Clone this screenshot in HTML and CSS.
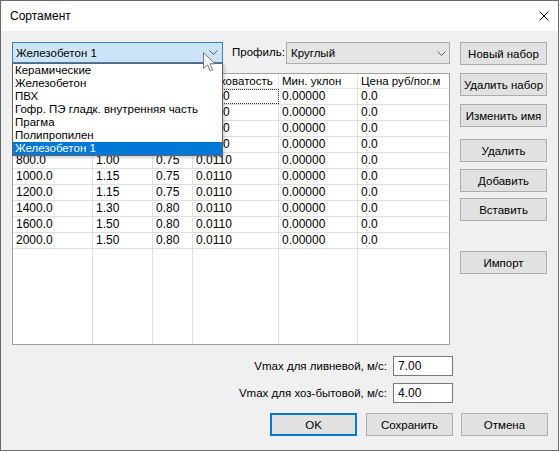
FILE: index.html
```html
<!DOCTYPE html>
<html lang="ru">
<head>
<meta charset="utf-8">
<title>Сортамент</title>
<link rel="stylesheet" href="styles.css">
</head>
<body>
<div class="window">
  <div class="titlebar">
    <span class="title">Сортамент</span>
    <svg class="close" width="10" height="10" viewBox="0 0 10 10"><path d="M0.5 0.5 L9.5 9.5 M9.5 0.5 L0.5 9.5" stroke="#000" stroke-width="1" fill="none"/></svg>
  </div>
  <div class="content">
    <div class="main">
      <div class="left">
        <div class="toprow">
          <div class="combo combo-open">
            <span class="combo-text">Железобетон 1</span>
            <svg class="chev" width="9" height="5" viewBox="0 0 9 5"><path d="M0.5 0.5 L4.5 4.5 L8.5 0.5" stroke="#606060" fill="none"/></svg>
            <ul class="droplist">
              <li>Керамические</li>
              <li>Железобетон</li>
              <li>ПВХ</li>
              <li>Гофр. ПЭ гладк. внутренняя часть</li>
              <li>Прагма</li>
              <li>Полипропилен</li>
              <li class="sel">Железобетон 1</li>
            </ul>
          </div>
          <span class="lbl">Профиль:</span>
          <div class="combo combo-profile">
            <span class="combo-text">Круглый</span>
            <svg class="chev" width="9" height="5" viewBox="0 0 9 5"><path d="M0.5 0.5 L4.5 4.5 L8.5 0.5" stroke="#606060" fill="none"/></svg>
          </div>
        </div>
        <div class="grid">
          <div class="row head">
            <div class="cell"></div>
            <div class="cell"></div>
            <div class="cell"></div>
            <div class="cell hidden-start">ховатость</div>
            <div class="cell">Мин. уклон</div>
            <div class="cell">Цена руб/пог.м</div>
          </div>
          <div class="row"><div class="cell"></div><div class="cell"></div><div class="cell"></div><div class="cell focus hidden-start">0</div><div class="cell">0.00000</div><div class="cell">0.0</div></div>
          <div class="row"><div class="cell"></div><div class="cell"></div><div class="cell"></div><div class="cell hidden-start">0</div><div class="cell">0.00000</div><div class="cell">0.0</div></div>
          <div class="row"><div class="cell"></div><div class="cell"></div><div class="cell"></div><div class="cell hidden-start">0</div><div class="cell">0.00000</div><div class="cell">0.0</div></div>
          <div class="row"><div class="cell"></div><div class="cell"></div><div class="cell"></div><div class="cell hidden-start">0</div><div class="cell">0.00000</div><div class="cell">0.0</div></div>
          <div class="row"><div class="cell">800.0</div><div class="cell">1.00</div><div class="cell">0.75</div><div class="cell">0.0110</div><div class="cell">0.00000</div><div class="cell">0.0</div></div>
          <div class="row"><div class="cell">1000.0</div><div class="cell">1.15</div><div class="cell">0.75</div><div class="cell">0.0110</div><div class="cell">0.00000</div><div class="cell">0.0</div></div>
          <div class="row"><div class="cell">1200.0</div><div class="cell">1.15</div><div class="cell">0.75</div><div class="cell">0.0110</div><div class="cell">0.00000</div><div class="cell">0.0</div></div>
          <div class="row"><div class="cell">1400.0</div><div class="cell">1.30</div><div class="cell">0.80</div><div class="cell">0.0110</div><div class="cell">0.00000</div><div class="cell">0.0</div></div>
          <div class="row"><div class="cell">1600.0</div><div class="cell">1.50</div><div class="cell">0.80</div><div class="cell">0.0110</div><div class="cell">0.00000</div><div class="cell">0.0</div></div>
          <div class="row"><div class="cell">2000.0</div><div class="cell">1.50</div><div class="cell">0.80</div><div class="cell">0.0110</div><div class="cell">0.00000</div><div class="cell">0.0</div></div>
          <div class="row filler"><div class="cell"></div><div class="cell"></div><div class="cell"></div><div class="cell"></div><div class="cell"></div><div class="cell"></div></div>
        </div>
      </div>
      <div class="right">
        <div class="btn">Новый набор</div>
        <div class="btn mt8">Удалить набор</div>
        <div class="btn mt8">Изменить имя</div>
        <div class="btn mt12">Удалить</div>
        <div class="btn mt7">Добавить</div>
        <div class="btn mt6">Вставить</div>
        <div class="btn mt30">Импорт</div>
      </div>
    </div>
    <div class="vrow first">
      <span class="vlabel">Vmax для ливневой, м/с:</span>
      <div class="edit">7.00</div>
    </div>
    <div class="vrow second">
      <span class="vlabel">Vmax для хоз-бытовой, м/с:</span>
      <div class="edit">4.00</div>
    </div>
    <div class="footer">
      <div class="btn default">OK</div>
      <div class="btn save">Сохранить</div>
      <div class="btn cancel">Отмена</div>
    </div>
  </div>
  <svg class="cursor" width="13" height="20" viewBox="0 0 13 20"><path d="M0.5 0.5 L0.5 16.5 L4.5 12.8 L7.2 19 L9.6 18 L7 11.8 L12 11.8 Z" fill="#f4f4f4" stroke="#7a7a7a" stroke-width="1" stroke-linejoin="round"/></svg>
</div>
</body>
</html>
```

FILE: styles.css
```css
html, body {
  margin: 0;
  padding: 0;
  background: #f0f0f0;
}

.window {
  position: relative;
  width: 559px;
  height: 451px;
  box-sizing: border-box;
  border: 1px solid #6b6b6b;
  background: #f0f0f0;
  font-family: "Liberation Sans", Arial, sans-serif;
  font-size: 11.5px;
  color: #000;
  display: flex;
  flex-direction: column;
  overflow: hidden;
}

.titlebar {
  height: 30px;
  background: #fff;
  display: flex;
  align-items: center;
  justify-content: space-between;
  padding: 0 9px 0 9px;
  flex: none;
}

.title {
  font-size: 12px;
}

.content {
  padding: 11px 10px 0 11px;
  display: flex;
  flex-direction: column;
}

.main {
  display: flex;
}

.left {
  width: 438px;
  display: flex;
  flex-direction: column;
}

.right {
  width: 87px;
  margin-left: 10px;
  display: flex;
  flex-direction: column;
}

.toprow {
  display: flex;
  align-items: flex-start;
  height: 22px;
}

.combo {
  position: relative;
  box-sizing: border-box;
  display: flex;
  align-items: center;
  justify-content: space-between;
  padding: 0 4px 0 3px;
}

.combo-open {
  width: 211px;
  height: 21px;
  background: #cce4f7;
  border: 1px solid #3a7fc1;
  z-index: 2;
}

.combo-profile {
  width: 164px;
  height: 22px;
  background: #e5e5e5;
  border: 1px solid #acacac;
  padding-left: 4px;
  padding-right: 3px;
}

.combo-text {
  white-space: nowrap;
}

.chev {
  flex: none;
}

.lbl {
  flex: 1;
  margin-left: 9px;
  line-height: 20px;
}

.droplist {
  position: absolute;
  left: -1px;
  top: 20px;
  width: 211px;
  box-sizing: border-box;
  margin: 0;
  padding: 0;
  list-style: none;
  background: #fff;
  border: 1px solid #646464;
  box-shadow: 2px 2px 3px rgba(0, 0, 0, 0.18);
}

.droplist li {
  height: 13px;
  line-height: 13px;
  padding-left: 2px;
  white-space: nowrap;
}

.droplist li.sel {
  background: #0078d7;
  color: #fff;
}

.grid {
  margin-top: 9px;
  height: 272px;
  box-sizing: border-box;
  border: 1px solid #a0a0a0;
  background: #fff;
  display: flex;
  flex-direction: column;
  overflow: hidden;
}

.row {
  display: grid;
  grid-template-columns: 80px 60px 40px 86px 79px 1fr;
  height: 16px;
  box-sizing: border-box;
  border-bottom: 1px solid #e0e0e0;
  flex: none;
}

.row.head {
  height: 15px;
  border-bottom-color: #e5e5e5;
}

.row.filler {
  flex: 1;
  border-bottom: none;
}

.cell {
  box-sizing: border-box;
  border-right: 1px solid #e0e0e0;
  padding: 0 3px;
  font-size: 12px;
  line-height: 15px;
  white-space: nowrap;
  overflow: hidden;
}

.cell.hidden-start {
  padding-left: 30px;
}

.row.head .cell {
  font-size: 11.5px;
  line-height: 14px;
  border-right-color: #e5e5e5;
}

.row.head .cell.hidden-start {
  padding-left: 27px;
}

.cell:last-child {
  border-right: none;
}

.cell.focus {
  outline: 1px dotted #404040;
  outline-offset: -1px;
}

.btn {
  box-sizing: border-box;
  width: 87px;
  height: 23px;
  border: 1px solid #adadad;
  background: #e1e1e1;
  display: flex;
  align-items: center;
  justify-content: center;
  white-space: nowrap;
}

.mt6 { margin-top: 6px; }
.mt7 { margin-top: 7px; }
.mt8 { margin-top: 8px; }
.mt12 { margin-top: 12px; }
.mt30 { margin-top: 30px; }

.vrow {
  display: flex;
  justify-content: flex-end;
  align-items: center;
  padding-right: 95px;
}

.vrow.first {
  margin-top: 11px;
}

.vrow.second {
  margin-top: 7px;
}

.vlabel {
  margin-right: 6px;
}

.edit {
  box-sizing: border-box;
  width: 60px;
  height: 20px;
  border: 1px solid #7a7a7a;
  background: #fff;
  padding-left: 4px;
  line-height: 18px;
  font-size: 12px;
}

.footer {
  display: flex;
  justify-content: flex-end;
  margin-top: 10px;
}

.btn.default {
  border: 2px solid #0078d7;
}

.btn.save {
  margin-left: 9px;
}

.btn.cancel {
  margin-left: 8px;
}

.cursor {
  position: absolute;
  left: 202px;
  top: 51px;
  z-index: 5;
}
```
